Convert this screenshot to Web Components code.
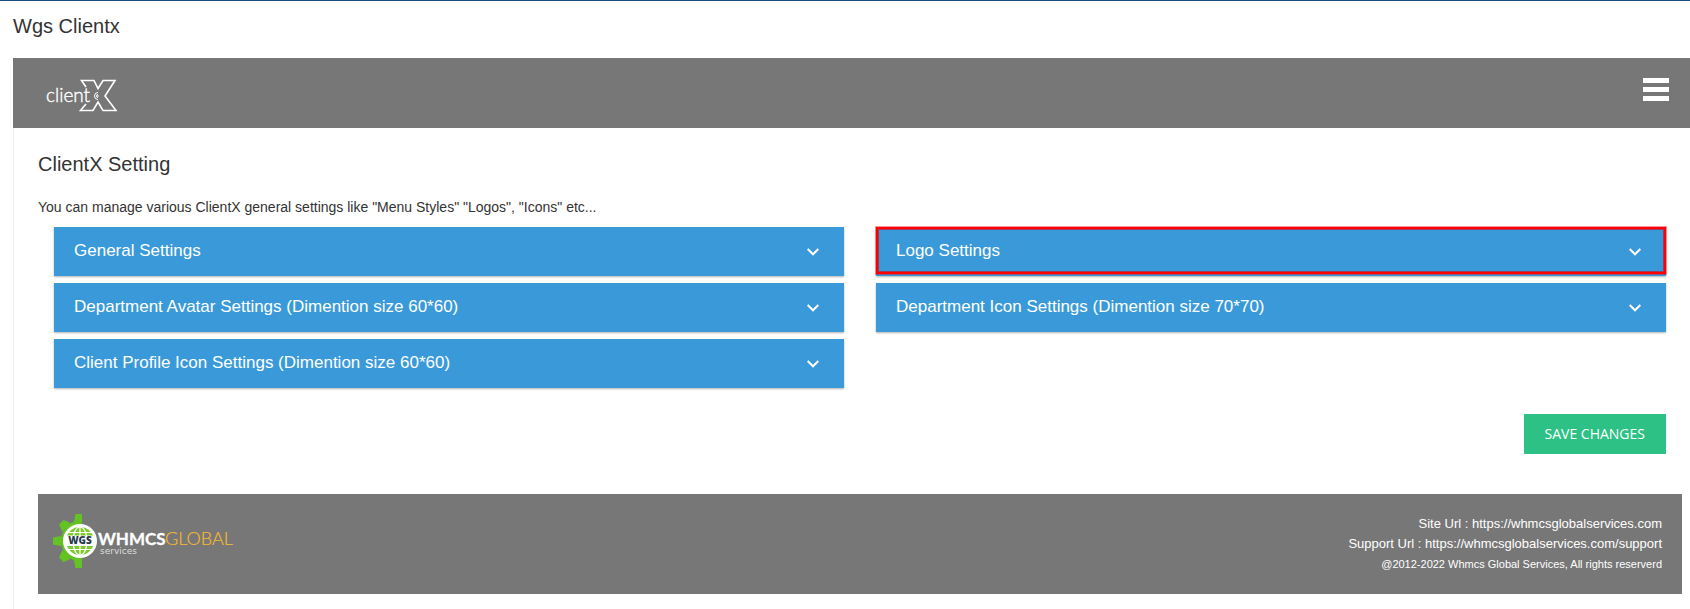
<!DOCTYPE html>
<html lang="en">

<head>
  <meta charset="UTF-8">
  <meta name="viewport" content="width=device-width, initial-scale=1.0">
  <title>Wgs Clientx</title>
  <style>
    body {
      margin: 0;
      background: #fff;
      color: #333;
      font-family: "Liberation Sans", Arial, sans-serif;
      font-size: 14px;
      line-height: 20px;
    }
  </style>
</head>

<body>
  <addon-page heading="Wgs Clientx">
    <addon-navbar></addon-navbar>
    <settings-panel heading="ClientX Setting">
      <span slot="intro">You can manage various ClientX general settings like "Menu Styles" "Logos", "Icons" etc...</span>
      <setting-item>General Settings</setting-item>
      <setting-item marked>Logo Settings</setting-item>
      <setting-item>Department Avatar Settings (Dimention size 60*60)</setting-item>
      <setting-item>Department Icon Settings (Dimention size 70*70)</setting-item>
      <setting-item>Client Profile Icon Settings (Dimention size 60*60)</setting-item>
      <save-button slot="actions">SAVE CHANGES</save-button>
    </settings-panel>
    <addon-footer></addon-footer>
  </addon-page>

  <template id="addon-page">
    <style>
      :host {
        display: block;
        border-top: 1px solid #1a4d80;
      }
      h1 {
        margin: 0;
        padding: 13px 13px 20px;
        font-size: 20px;
        font-weight: 400;
        line-height: 24px;
      }
      main {
        margin-left: 13px;
        padding-bottom: 15px;
        box-shadow: inset 1px 0 #ebf1f8;
      }
    </style>
    <h1></h1>
    <main><slot></slot></main>
  </template>

  <template id="addon-navbar">
    <style>
      :host {
        display: flex;
        align-items: center;
        justify-content: space-between;
        height: 70px;
        padding: 0 21px 0 32px;
        background: #777;
      }
      a, svg {
        display: block;
      }
      a {
        margin-top: 5px;
      }
      text {
        font: 300 19px Lato, sans-serif;
      }
      button {
        display: grid;
        gap: 4px;
        margin-bottom: 8px;
        padding: 0;
        border: 0;
        background: none;
        cursor: pointer;
      }
      button span {
        width: 26px;
        height: 5px;
        background: #fff;
      }
    </style>
    <a href="#" aria-label="clientX">
      <svg width="72" height="36" viewBox="0 0 72 36" fill="none" stroke="#fff">
        <text x="1" y="24" fill="#fff" stroke="#fff" stroke-width=".4">client</text>
        <path stroke-width="1.6" d="M41 9 36.500 2.500H49L53 10.500 58 2.500H70L60 18 71 32.500H58L53 24 48 32.500H35.500L41 26"/>
        <path stroke-width="1" d="M53 14.500a3.500 3.500 0 1 0 0 7M53 16.500a1.500 1.500 0 1 0 0 3"/>
        <circle cx="53" cy="18" r=".8" fill="#fff" stroke="none"/>
      </svg>
    </a>
    <button type="button" aria-label="Menu"><span></span><span></span><span></span></button>
  </template>

  <template id="settings-panel">
    <style>
      :host {
        display: block;
        padding: 24px 24px 40px 25px;
      }
      h2 {
        margin: 0 0 21px;
        font-size: 20px;
        font-weight: 400;
        line-height: 24px;
      }
      p {
        margin: 0 0 10px;
      }
      .items {
        display: grid;
        grid-template-columns: 1fr 1fr;
        gap: 7px 32px;
        padding-left: 16px;
      }
      .actions {
        display: flex;
        justify-content: flex-end;
        margin-top: 26px;
      }
    </style>
    <h2></h2>
    <p><slot name="intro"></slot></p>
    <div class="items"><slot></slot></div>
    <div class="actions"><slot name="actions"></slot></div>
  </template>

  <template id="setting-item">
    <style>
      :host {
        display: block;
        position: relative;
      }
      button {
        display: flex;
        align-items: center;
        justify-content: space-between;
        width: 100%;
        height: 49px;
        padding: 0 25px 2px 20px;
        border: 0;
        background: #3a9ad9;
        box-shadow: 0 1px 2px rgba(0, 0, 0, .3);
        color: #fff;
        font: inherit;
        font-size: 17px;
        text-align: left;
        cursor: pointer;
      }
      svg {
        flex: none;
        margin-top: 2px;
      }
      /* highlight frame over the marked item */
      :host([marked])::after {
        content: "";
        position: absolute;
        inset: 0 0 2px;
        border: 2px solid #f00;
        box-shadow: 0 0 0 1px rgba(255, 0, 0, .4), inset 0 0 0 1px rgba(200, 20, 40, .7);
        pointer-events: none;
      }
    </style>
    <button type="button" aria-expanded="false">
      <span><slot></slot></span>
      <svg width="12" height="8" viewBox="0 0 12 8" fill="none" stroke="#fff" stroke-width="2" aria-hidden="true">
        <path d="M.7 1 6 6.300 11.300 1"/>
      </svg>
    </button>
  </template>

  <template id="save-button">
    <style>
      :host {
        display: block;
      }
      button {
        height: 40px;
        padding: 0 21px 2px;
        border: 0;
        background: #2dc186;
        color: #fff;
        font: 14px "Open Sans", sans-serif;
        cursor: pointer;
      }
    </style>
    <button type="button"><slot></slot></button>
  </template>

  <template id="addon-footer">
    <style>
      :host {
        display: flex;
        justify-content: space-between;
        align-items: center;
        min-height: 100px;
        margin: 0 8px 0 25px;
        padding: 0 20px 0 15px;
        box-sizing: border-box;
        background: #777;
        color: #fff;
        font-size: 13px;
      }
      a {
        color: inherit;
        text-decoration: none;
      }
      svg {
        display: block;
        margin-bottom: 6px;
      }
      .links {
        text-align: right;
      }
      .links p {
        margin: 0;
      }
      .links .copy {
        font-size: 11px;
      }
      .name {
        font: 700 17px Lato, sans-serif;
      }
      .global {
        font: 300 18px Lato, sans-serif;
      }
      .sub {
        font: 9px "DejaVu Sans", sans-serif;
      }
      .wgs {
        font: 800 10px "Open Sans", sans-serif;
      }
    </style>
    <a href="#" aria-label="WHMCS Global Services">
      <svg width="182" height="54" viewBox="0 0 182 54">
        <g fill="#62c322">
          <path d="M29 6v42A21 21 0 0 1 29 6z"/>
          <path d="M22.500 0H29V9L21 8z"/>
          <path d="M22.500 54H29V45L21 46z"/>
          <path d="M0 23.500 8 22V32L0 30.500z"/>
          <path d="M6 10.500 10.500 6 17.500 9 9.500 18z"/>
          <path d="M6 43.500 10.500 48 17.500 45 9.500 36z"/>
        </g>
        <circle cx="27" cy="27" r="17" fill="#fff"/>
        <circle cx="27" cy="27" r="14" fill="#7fc931"/>
        <g fill="none" stroke="#fff" stroke-width="1.200">
          <ellipse cx="27" cy="27" rx="7" ry="14"/>
          <path d="M27 13V41M15 18.500H39M15 35.500H39"/>
        </g>
        <path d="M11 21.500H43V32H11z" fill="#fff"/>
        <text class="wgs" x="27" y="30" text-anchor="middle" fill="#263a4d">WGS</text>
        <text class="name" x="45" y="31" fill="#fff" stroke="#fff" stroke-width=".3">WHMCS</text>
        <text class="global" x="112" y="31" fill="#f3b832" stroke="#f3b832" stroke-width=".2">GLOBAL</text>
        <text class="sub" x="47" y="40" fill="#ddd">services</text>
      </svg>
    </a>
    <div class="links">
      <p>Site Url : <a href="https://whmcsglobalservices.com">https://whmcsglobalservices.com</a></p>
      <p>Support Url : <a href="https://whmcsglobalservices.com/support">https://whmcsglobalservices.com/support</a></p>
      <p class="copy">@2012-2022 Whmcs Global Services, All rights reserverd</p>
    </div>
  </template>

  <script>
    // every element clones the template that has its own tag name
    class AddonElement extends HTMLElement {
      constructor() {
        super();
        const shadow = this.attachShadow({ mode: 'open' });
        const template = document.getElementById(this.localName);
        shadow.appendChild(template.content.cloneNode(true));
      }
    }

    // elements with a title taken from the heading attribute
    class HeadingElement extends AddonElement {
      connectedCallback() {
        this.shadowRoot.querySelector('h1, h2').textContent = this.getAttribute('heading');
      }
    }

    class SettingItem extends AddonElement {
      connectedCallback() {
        const button = this.shadowRoot.querySelector('button');
        button.addEventListener('click', () => {
          const open = button.getAttribute('aria-expanded') === 'true';
          button.setAttribute('aria-expanded', String(!open));
        });
      }
    }

    customElements.define('addon-page', class extends HeadingElement {});
    customElements.define('addon-navbar', class extends AddonElement {});
    customElements.define('settings-panel', class extends HeadingElement {});
    customElements.define('setting-item', SettingItem);
    customElements.define('save-button', class extends AddonElement {});
    customElements.define('addon-footer', class extends AddonElement {});
  </script>
</body>

</html>
